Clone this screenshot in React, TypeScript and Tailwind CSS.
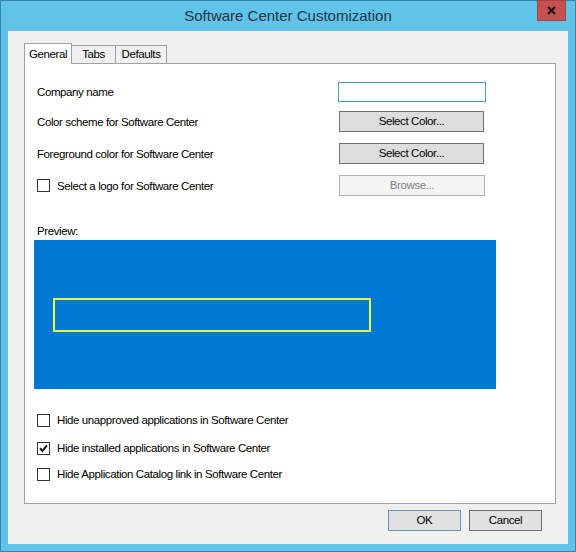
import React from "react";

function CheckBox({ checked = false }: { checked?: boolean }) {
  return (
    <div className="w-[13px] h-[13px] border border-[#333333] bg-white flex items-center justify-center shrink-0">
      {checked && (
        <svg width="11" height="11" viewBox="0 0 11 11">
          <path d="M2 5.3 L4.4 7.9 L9 2.3" fill="none" stroke="#1a1a1a" strokeWidth="2" />
        </svg>
      )}
    </div>
  );
}

function Btn({ children, className = "" }: { children: React.ReactNode; className?: string }) {
  return (
    <div
      className={
        "h-[21px] border border-[#707070] bg-[#dddddd] flex items-center justify-center pt-[1px] text-[11.5px] tracking-[-0.4px] text-black " +
        className
      }
    >
      {children}
    </div>
  );
}

export default function App() {
  return (
    <div className="w-[576px] h-[552px] bg-[#62c3e9] border border-[#2f86ab] flex flex-col font-['Liberation_Sans',Arial,sans-serif] text-black">
      {/* Title bar */}
      <div className="relative h-[30px] flex items-center justify-center">
        <span className="text-[15px] text-[#1b3545] mt-[1px]">Software Center Customization</span>
        <div className="absolute right-[9px] top-[-1px] w-[29px] h-[21px] bg-[#c75050] border border-[#a84343] flex items-center justify-center">
          <svg width="9" height="9" viewBox="0 0 10 10">
            <path d="M1.2 1.2 L8.8 8.8 M8.8 1.2 L1.2 8.8" stroke="#151515" strokeWidth="2.4" />
          </svg>
        </div>
      </div>

      {/* Client area */}
      <div className="mx-[7px] mb-[7px] flex-1 bg-[#f0f0f0] flex flex-col pl-[16px] pr-[12px] pt-[12px]">
        {/* Tab strip */}
        <div className="flex items-end h-[20px]">
          <div className="relative z-10 w-[48px] h-[21px] -mb-px bg-white border border-b-0 border-[#a0a0a0] flex items-start justify-center pt-[2px] text-[11.5px] tracking-[-0.4px]">
            General
          </div>
          <div className="w-[44px] h-[18px] bg-[#f0f0f0] border border-l-0 border-b-0 border-[#a0a0a0] flex items-center justify-center text-[11.5px] tracking-[-0.4px]">
            Tabs
          </div>
          <div className="w-[51px] h-[18px] bg-[#f0f0f0] border border-l-0 border-b-0 border-[#a0a0a0] flex items-center justify-center text-[11.5px] tracking-[-0.4px]">
            Defaults
          </div>
        </div>

        {/* Tab panel */}
        <div className="w-[532px] h-[441px] bg-white border border-[#a0a0a0] flex flex-col pl-[12px] text-[11.5px] tracking-[-0.4px]">
          <div className="mt-[18px] h-[20px] flex items-center">
            <div className="w-[301px] pt-[2px]">Company name</div>
            <div className="w-[148px] h-[20px] border border-[#4a9fb5] bg-white" />
          </div>
          <div className="mt-[9px] h-[21px] flex items-center">
            <div className="w-[302px] pt-[2px]">Color scheme for Software Center</div>
            <Btn className="w-[145px]">Select Color...</Btn>
          </div>
          <div className="mt-[11px] h-[21px] flex items-center">
            <div className="w-[302px] pt-[2px]">Foreground color for Software Center</div>
            <Btn className="w-[145px]">Select Color...</Btn>
          </div>
          <div className="mt-[11px] h-[21px] flex items-center">
            <div className="w-[302px] flex items-center gap-[7px]">
              <CheckBox />
              <span className="pt-[2px]">Select a logo for Software Center</span>
            </div>
            <div className="w-[146px] h-[21px] border border-[#adb2b5] bg-[#f4f4f4] flex items-center justify-center pt-[1px] text-[#838383]">
              Browse...
            </div>
          </div>

          <div className="mt-[27px] h-[15px] flex items-center pt-[2px]">Preview:</div>
          <div className="mt-[2px] -ml-[3px] w-[462px] h-[149px] bg-[#0278d5] pt-[58px] pl-[19px]">
            <div className="w-[318px] h-[34px] border-2 border-[#e6f43c]" />
          </div>

          <div className="mt-[23px] h-[16px] flex items-center gap-[7px]">
            <CheckBox />
            <span className="pt-[2px]">Hide unapproved applications in Software Center</span>
          </div>
          <div className="mt-[12px] h-[16px] flex items-center gap-[7px]">
            <CheckBox checked />
            <span className="pt-[2px]">Hide installed applications in Software Center</span>
          </div>
          <div className="mt-[10px] h-[16px] flex items-center gap-[7px]">
            <CheckBox />
            <span className="pt-[2px]">Hide Application Catalog link in Software Center</span>
          </div>
        </div>

        {/* Dialog buttons */}
        <div className="mt-[6px] flex justify-end gap-[8px] pr-[14px]">
          <div className="w-[73px] h-[21px] border border-[#6b95bb] bg-[#e1e1e1] flex items-center justify-center pt-[1px] text-[11.5px] tracking-[-0.4px]">
            OK
          </div>
          <div className="w-[73px] h-[21px] border border-[#707070] bg-[#e1e1e1] flex items-center justify-center pt-[1px] text-[11.5px] tracking-[-0.4px]">
            Cancel
          </div>
        </div>
      </div>
    </div>
  );
}
